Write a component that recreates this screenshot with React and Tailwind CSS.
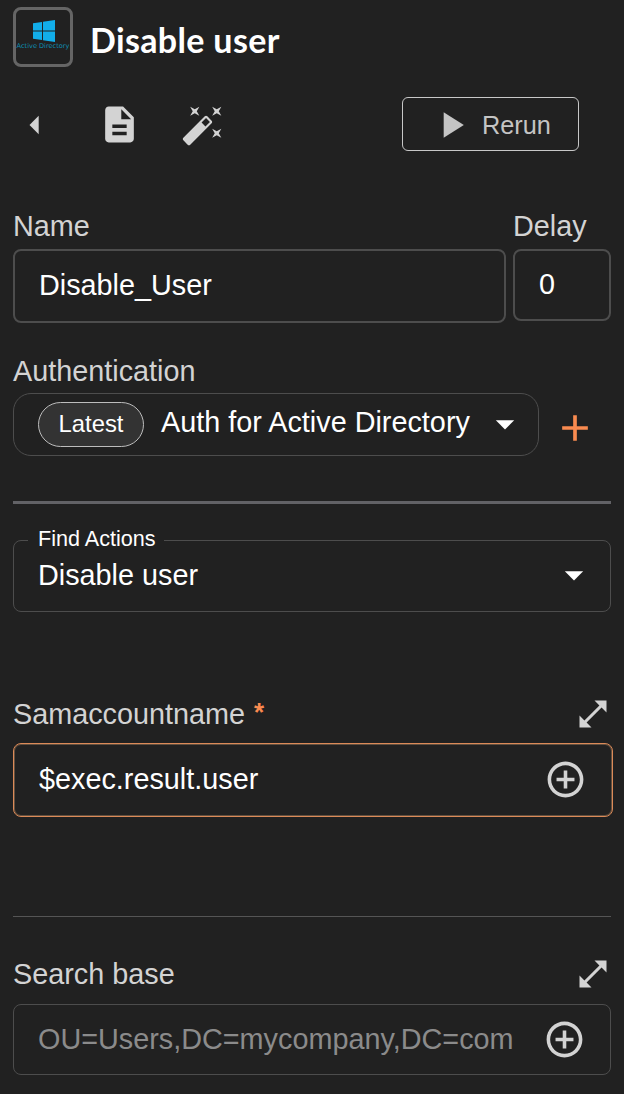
import { MdAdd, MdAddCircleOutline, MdArrowDropDown, MdArrowLeft, MdDescription, MdOpenInFull, MdPlayArrow } from "react-icons/md";

function WandIcon() {
  return (
    <svg viewBox="0 0 24 24" className="size-11" fill="currentColor">
      <path d="M7.5 5.6L10 7 8.6 4.5 10 2 7.5 3.4 5 2l1.4 2.5L5 7zm12 9.8L17 14l1.4 2.5L17 19l2.5-1.4L22 19l-1.4-2.5L22 14zM22 2l-2.5 1.4L17 2l1.4 2.5L17 7l2.5-1.4L22 7l-1.4-2.5zm-7.63 5.29a.9959.9959 0 0 0-1.41 0L1.29 18.96c-.39.39-.39 1.02 0 1.41l2.34 2.34c.39.39 1.02.39 1.41 0L16.7 11.05c.39-.39.39-1.02 0-1.41l-2.33-2.35zm-1.03 5.49l-2.12-2.12 2.44-2.44 2.12 2.12-2.44 2.44z" />
    </svg>
  );
}

function AppLogo() {
  return (
    <div className="flex size-[60px] shrink-0 flex-col items-center overflow-hidden rounded-lg border-3 border-[#656565] pt-[10px] text-[#12aeea]">
      <svg viewBox="0 0 22 22" className="ml-[2px] h-[22px] w-[22px] shrink-0" fill="currentColor">
        <path d="M0 3.2 9 1.9V10.4H0zM10 1.7 22 0V10.4H10zM0 11.4H9V20L0 18.8zM10 11.4H22V22L10 20.2z" />
      </svg>
      <span className="font-['DejaVu_Sans',sans-serif] text-[6.6px] leading-[9px] whitespace-nowrap text-[#0e8fb4]">Active Directory</span>
    </div>
  );
}

function Label({ children }) {
  return <div className="text-[28.8px] leading-8 whitespace-nowrap text-[#d3d3d3]">{children}</div>;
}

export default function App() {
  return (
    <main className="flex h-[1094px] w-[624px] flex-col overflow-hidden bg-[#212121] pt-[7px] pl-[13px] font-['Liberation_Sans',Arial,sans-serif] text-white">
      <header className="flex h-[60px] items-center gap-[17px]">
        <AppLogo />
        <h1 className="pt-[6px] font-['Lato',sans-serif] text-[34px] leading-10 font-bold tracking-[0.35px] whitespace-nowrap">Disable user</h1>
      </header>

      <div className="mt-[30px] flex h-[54px] items-center text-[#d3d3d3]">
        <MdArrowLeft className="mt-px size-11" />
        <MdDescription className="mt-px ml-[41px] size-[43px]" />
        <div className="mt-px ml-10">
          <WandIcon />
        </div>
        <button className="ml-[177px] flex h-[54px] w-[177px] items-center rounded-md border border-[#c8c8c8] pl-[26px] text-[#c4c4c4]">
          <MdPlayArrow className="mt-px size-11 shrink-0" />
          <span className="ml-[9px] pt-px text-[25.3px] leading-8">Rerun</span>
        </button>
      </div>

      <div className="mt-[59px] flex gap-[7px]">
        <div className="w-[493px]">
          <Label>Name</Label>
          <div className="mt-[7px] flex h-[74px] items-center rounded-lg border-2 border-[#4d4d4d] pl-6 text-[28.8px]">Disable_User</div>
        </div>
        <div className="w-[98px]">
          <Label>Delay</Label>
          <div className="mt-[7px] flex h-[72px] items-center rounded-lg border-2 border-[#4d4d4d] pl-6 text-[28.8px]">0</div>
        </div>
      </div>

      <div className="mt-[32px]">
        <Label>Authentication</Label>
      </div>
      <div className="mt-[6px] flex h-[63px] items-center">
        <div className="flex h-[63px] w-[526px] items-center rounded-[18px] border border-[#4d4d4d] pl-6">
          <span className="flex h-[45px] w-[106px] items-center justify-center rounded-full border border-[#bdbdbd] bg-[#333333] pb-[2px] text-[23.8px]">Latest</span>
          <span className="ml-[17px] w-[322px] pb-[5px] text-[28.8px] leading-8 whitespace-nowrap">Auth for Active Directory</span>
          <MdArrowDropDown className="mt-[-1px] size-11 shrink-0" />
        </div>
        <MdAdd className="mt-[7px] ml-[14px] size-11 text-[#f98b50]" />
      </div>

      <hr className="mt-[45px] h-[3px] w-[598px] shrink-0 border-0 bg-[#626266]" />

      <fieldset className="mt-[23px] flex h-[85px] w-[598px] shrink-0 items-start rounded-lg border border-[#4d4d4d] pl-6">
        <legend className="ml-[-10px] h-[26px] pr-[8px] pl-[10px] text-[21.6px] leading-6">Find Actions</legend>
        <div className="flex w-full items-center">
          <span className="flex-1 text-[28.8px] leading-8">Disable user</span>
          <MdArrowDropDown className="mr-[14px] size-11" />
        </div>
      </fieldset>

      <div className="mt-[83px] flex h-[38px] w-[598px] items-center justify-between">
        <Label>
          Samaccountname <span className="ml-px inline-block -translate-y-[3px] text-[26px] leading-none font-bold text-[#f98b50]">*</span>
        </Label>
        <MdOpenInFull className="size-9 text-[#d3d3d3]" />
      </div>
      <div className="mt-[10px] flex h-[74px] w-[600px] items-center justify-between rounded-lg border border-[#dc8a58] pr-[25px] pl-[25px] text-[28.8px] shadow-[inset_0_0_0_1px_#63503f]">
        <span>$exec.result.user</span>
        <MdAddCircleOutline className="mb-px size-[43px] text-[#d3d3d3]" />
      </div>

      <hr className="mt-[99px] h-px w-[598px] shrink-0 border-0 bg-[#555555]" />

      <div className="mt-[38px] flex h-[38px] w-[598px] items-center justify-between">
        <Label>Search base</Label>
        <MdOpenInFull className="size-9 text-[#d3d3d3]" />
      </div>
      <div className="mt-[11px] flex h-[71px] w-[598px] items-center justify-between rounded-lg border border-[#4d4d4d] pr-[24px] pl-6 text-[28.8px] text-[#8b8b8b]">
        <span>OU=Users,DC=mycompany,DC=com</span>
        <MdAddCircleOutline className="mb-px size-[43px] text-[#d3d3d3]" />
      </div>
    </main>
  );
}
